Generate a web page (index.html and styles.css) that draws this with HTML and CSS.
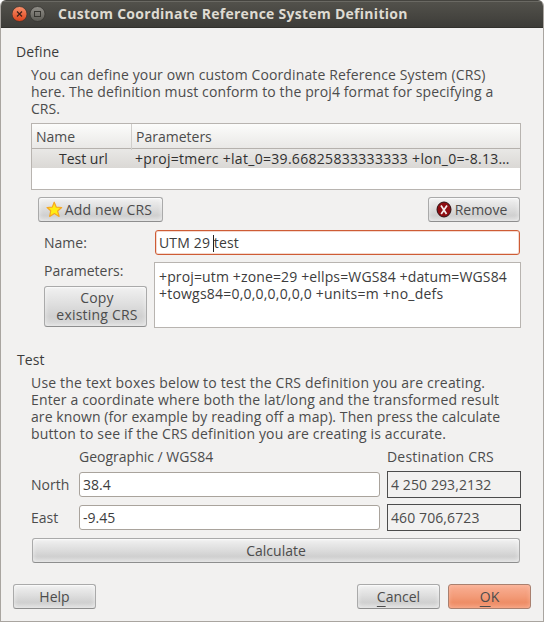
FILE: index.html
```html
<!DOCTYPE html>
<html lang="en">
<head>
<meta charset="utf-8">
<title>Custom Coordinate Reference System Definition</title>
<link rel="stylesheet" href="styles.css">
</head>
<body>
<div class="window">
  <header class="titlebar">
    <svg class="controls" width="34" height="16" viewBox="0 0 34 16">
      <defs>
        <linearGradient id="close" x2="0" y2="1"><stop stop-color="#f8906b"/><stop offset="1" stop-color="#dd421a"/></linearGradient>
        <linearGradient id="max" x2="0" y2="1"><stop stop-color="#92908a"/><stop offset="1" stop-color="#5c5b55"/></linearGradient>
      </defs>
      <circle cx="7.5" cy="8" r="7.5" fill="url(#close)" stroke="#32312d" stroke-width=".7"/>
      <path d="M5 5.500l5 5m0-5l-5 5" stroke="#3c2018" stroke-width="1.200"/>
      <circle cx="25.5" cy="8" r="7.5" fill="url(#max)" stroke="#32312d" stroke-width=".7"/>
      <rect x="22.5" y="5.5" width="6" height="5" fill="none" stroke="#35342f"/>
    </svg>
    <h1>Custom Coordinate Reference System Definition</h1>
  </header>
  <main>
    <h2>Define</h2>
    <p class="copy intro"><span class="i1">You can define your own custom Coordinate Reference System (CRS)</span><span class="i2">here. The definition must conform to the proj4 format for specifying a</span><span>CRS.</span></p>
    <div class="table">
      <div class="thead"><span class="col">Name</span><span class="col">Parameters</span></div>
      <div class="row"><span class="cell">Test url</span><span class="cell">+proj=tmerc +lat_0=39.66825833333333 +lon_0=-8.13…</span></div>
    </div>
    <div class="actions">
      <button class="add"><svg width="17" height="17" viewBox="0 0 17 17"><path d="M8.2 1.2l2 4.9 5.5.4-4.1 3.5 1.5 5.4-4.7-2.8-4.7 2.8 1-5.6L1.1 6.500l5.200-.4z" fill="#ffed12" stroke="#f5a623" stroke-width="1.200" stroke-linejoin="round"/></svg><span>Add new CRS</span></button>
      <button class="remove"><svg width="16" height="17" viewBox="0 0 16 17"><ellipse cx="8" cy="8.500" rx="7" ry="7.500" fill="#8e0d12" stroke="#2b1214"/><path d="M5 4.500l5.500 8.500M11 4.500L5.200 13" stroke="#f5eeee" stroke-width="1.700"/></svg><span>Remove</span></button>
    </div>
    <div class="definition">
      <div class="name-label">Name:</div>
      <div class="field focused">UTM 29 <i class="caret"></i>test</div>
      <div class="side"><div class="params-label">Parameters:</div><button class="copy-btn"><span>Copy<br>existing CRS</span></button></div>
      <div class="textarea"><span class="p1">+proj=utm +zone=29 +ellps=WGS84 +datum=WGS84</span><span class="p2">+towgs84=0,0,0,0,0,0,0 +units=m +no_defs</span></div>
    </div>
    <h2 class="test">Test</h2>
    <p class="copy help"><span class="h1">Use the text boxes below to test the CRS definition you are creating.</span><span class="h2">Enter a coordinate where both the lat/long and the transformed result</span><span class="h3">are known (for example by reading off a map). Then press the calculate</span><span class="h4">button to see if the CRS definition you are creating is accurate.</span></p>
    <div class="coords">
      <span></span><span class="head">Geographic / WGS84</span><span class="head dest">Destination CRS</span>
      <span>North</span><div class="field">38.4</div><output>4 250 293,2132</output>
      <span>East</span><div class="field">-9.45</div><output>460 706,6723</output>
    </div>
    <button class="calculate">Calculate</button>
    <footer>
      <button>Help</button>
      <button class="cancel"><span><u>C</u>ancel</span></button>
      <button class="ok"><span><u>O</u>K</span></button>
    </footer>
  </main>
</div>
</body>
</html>
```
FILE: styles.css
```css
* { box-sizing: border-box; }
body {
  margin: 0;
  background: #fff;
  color: #4c4c4c;
  font: 14px/17px "Open Sans", "Noto Sans", sans-serif;
}
.window {
  width: 544px;
  height: 622px;
  background: #f2f1f0;
  border: 1px solid #a9a5a0;
  border-top: 0;
  border-radius: 6px 6px 0 0;
  overflow: hidden;
}
.titlebar {
  height: 28px;
  margin: 0 -1px;
  padding: 0 0 0 12px;
  display: flex;
  align-items: center;
  background: linear-gradient(#53524c, #3d3c38);
  border-top: 1px solid #45443f;
  border-bottom: 1px solid #32312d;
  box-shadow: inset 0 1px #6a6963;
}
.controls { display: block; margin-right: 12px; }
h1 { margin: 0; font-size: 14px; line-height: 18px; font-weight: 700; color: #dfdbd2; white-space: nowrap; letter-spacing: .28px; }
main { padding: 15px 12px 0; }
h2 { margin: 0 0 0 3px; font-size: 14px; line-height: 18px; font-weight: 400; color: #3c3c3c; letter-spacing: .1px; }
.copy { margin: 5px 0 0 18px; }
.copy span, .textarea span { display: block; white-space: nowrap; width: max-content; }
.i1 { letter-spacing: .12px; }
.i2 { letter-spacing: .12px; }
.h1 { letter-spacing: .18px; }
.h2 { letter-spacing: .15px; }
.h3 { letter-spacing: .09px; }
.h4 { letter-spacing: .15px; }
.textarea .p1 { letter-spacing: .14px; }
.textarea .p2 { letter-spacing: .21px; }
.table {
  margin: 6px 10px 0 18px;
  height: 67px;
  background: #fff;
  border: 1px solid #b8b4b0;
}
.thead, .row { display: grid; grid-template-columns: 100px 1fr; white-space: nowrap; }
.thead { height: 25px; background: linear-gradient(#fcfcfb, #e9e8e6); border-bottom: 1px solid #b5b1ad; line-height: 26px; }
.col { padding-left: 4px; }
.col + .col { margin-left: -1px; border-left: 1px solid #d0cecb; }
.row { height: 19px; line-height: 19px; background: linear-gradient(#e9e8e6, #dad8d5); color: #303030; }
.row .cell { padding-left: 27px; }
.row .cell + .cell { padding-left: 3px; letter-spacing: .3px; }
.actions { display: flex; justify-content: space-between; margin: 7px 11px 0 25px; }
button {
  height: 25px;
  padding: 0 0 1px;
  display: flex;
  align-items: center;
  justify-content: center;
  font: inherit;
  color: #4c4c4c;
  border: 1px solid #aaa;
  border-bottom-color: #8e8e8e;
  border-radius: 3px;
  background: linear-gradient(#f1f1f1, #dedede 45%, #d0d0d0 75%, #dcdcdc);
  box-shadow: inset 0 0 5px #ffffff99, inset 0 1px #f8f8f8;
}
.add { width: 125px; gap: 2px; padding-right: 3px; letter-spacing: .15px; }
.remove { width: 92px; gap: 3px; padding-right: 5px; }
.definition {
  display: grid;
  grid-template-columns: 110px 367px;
  grid-template-rows: 25px 66px;
  row-gap: 7px;
  margin: 8px 0 0 31px;
}
.name-label { line-height: 26px; }
.field {
  height: 25px;
  padding-left: 3px;
  line-height: 24px;
  color: #3c3c3c;
  background: #fff;
  border: 1px solid #a9a39c;
  border-radius: 3px;
  white-space: pre;
}
.focused { margin: 0 1px; border-color: #ce5c35; box-shadow: inset 0 0 0 1px #f4d9cf; letter-spacing: .15px; }
.caret { display: inline-block; width: 1px; height: 17px; margin: 0 0 0 -1px; background: #222; vertical-align: -4px; }
.copy-btn { width: 103px; height: 41px; margin-top: 7px; padding-left: 3px; text-align: center; letter-spacing: .2px; }
.textarea { padding: 5px 4px; color: #3c3c3c; background: #fff; border: 1px solid #b8b4b0; }
.test { margin: 23px 0 0 4px; }
.coords {
  display: grid;
  grid-template-columns: 48px 301px 134px;
  grid-template-rows: 21px 27px 27px;
  row-gap: 6px;
  margin: 2px 0 0 18px;
  align-items: center;
}
.coords > :nth-child(3n) { margin-left: 7px; margin-right: -7px; }
.head { padding-top: 4px; }
.dest { letter-spacing: .2px; }
output { height: 27px; padding-left: 3px; line-height: 26px; border: 1px solid #4c4c4c; letter-spacing: .1px; }
.calculate { width: 488px; margin: 7px 0 0 19px; }
footer { display: flex; margin-top: 21px; }
footer button { width: 83px; }
.cancel { margin-left: auto; }
footer .ok { margin-left: 8px; border-color: #a9806f; background: linear-gradient(#f9b095, #f39b78 50%, #ee8e67 75%, #f39b78); box-shadow: inset 0 0 4px #ffc5ae99; }
u { text-underline-offset: 4px; }
```
